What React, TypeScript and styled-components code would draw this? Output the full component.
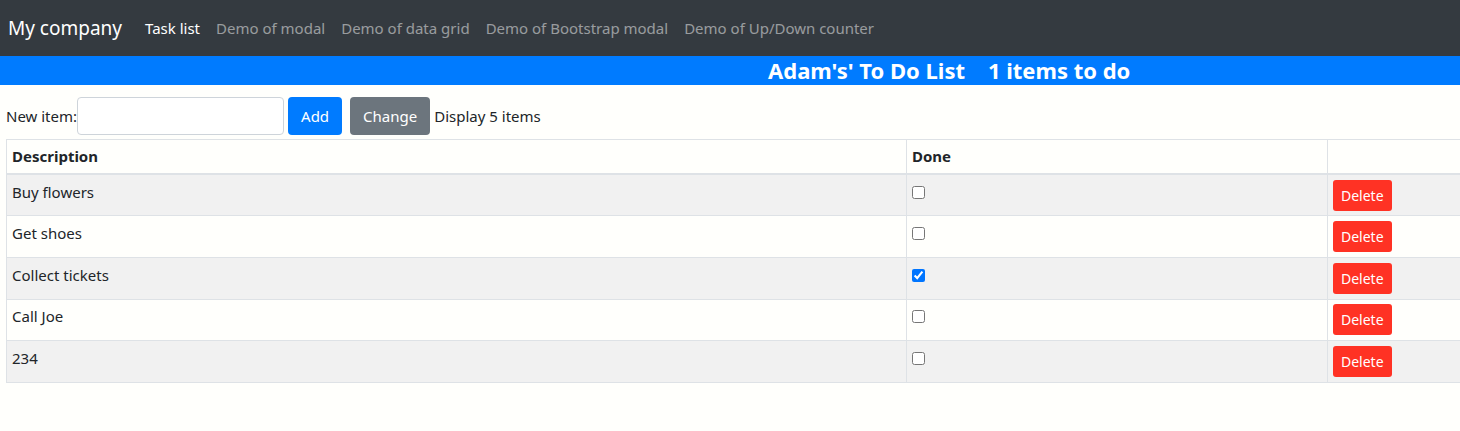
import React, { useState } from 'react';
import styled, { createGlobalStyle } from 'styled-components';

const GlobalStyle = createGlobalStyle`
  html, body {
    margin: 0;
    padding: 0;
    overflow-x: hidden;
    background-color: #fffffc;
    font-family: 'Noto Sans', 'Open Sans', sans-serif;
    font-size: 15px;
    color: #212529;
  }
`;

const Navbar = styled.nav`
  display: flex;
  align-items: center;
  height: 56px;
  padding: 0 8px;
  background-color: #343a40;
`;

const Brand = styled.span`
  color: #fff;
  font-size: 19px;
  margin-right: 15px;
`;

const NavLink = styled.a<{ $active?: boolean }>`
  color: ${p => (p.$active ? '#fff' : 'rgba(255, 255, 255, 0.5)')};
  font-size: 15px;
  text-decoration: none;
  padding: 0 8px;
`;

const Banner = styled.h4`
  margin: 0;
  height: 29px;
  line-height: 29px;
  background-color: #007bff;
  color: #fff;
  font-size: 22px;
  font-weight: 700;
  padding-left: 768px;
  white-space: pre;
`;

const Toolbar = styled.div`
  display: flex;
  align-items: center;
  padding: 12px 0 4px 6px;
  gap: 4px;
`;

const Label = styled.label`
  font-size: 15px;
`;

const TextInput = styled.input`
  box-sizing: border-box;
  width: 207px;
  height: 38px;
  border: 1px solid #ced4da;
  border-radius: 4px;
  background: #fff;
  margin-left: -4px;
`;

const Button = styled.button<{
  $variant: 'primary' | 'secondary' | 'danger';
  $small?: boolean;
  $spaced?: boolean;
}>`
  border: none;
  border-radius: ${p => (p.$small ? '3px' : '4px')};
  color: #fff;
  font-family: inherit;
  font-size: ${p => (p.$small ? '14px' : '15px')};
  height: ${p => (p.$small ? '31px' : '38px')};
  padding: ${p => (p.$small ? '0 8px' : '0 13px')};
  margin-left: ${p => (p.$spaced ? '4px' : '0')};
  background-color: ${p =>
    p.$variant === 'primary' ? '#007bff' : p.$variant === 'secondary' ? '#6c757d' : '#ff3224'};
`;

const Table = styled.table`
  margin-left: 6px;
  width: 1560px;
  table-layout: fixed;
  border-collapse: collapse;
  border: 1px solid #dee2e6;

  col.desc { width: 900px; }
  col.done { width: 421px; }

  th, td {
    border: 1px solid #dee2e6;
    padding: 4.8px 5px;
    text-align: left;
    vertical-align: top;
    font-size: 15px;
    line-height: 24px;
  }

  th {
    font-weight: 700;
    border-bottom-width: 2px;
    padding-top: 4px;
  }

  tbody tr:nth-child(odd) {
    background-color: #f1f1f1;
  }
`;

const Check = styled.input`
  margin: 6px 0 0 0;
  width: 13px;
  height: 13px;
`;

interface Item {
  action: string;
  done: boolean;
}

const App: React.FC = () => {
  const [items, setItems] = useState<Item[]>([
    { action: 'Buy flowers', done: false },
    { action: 'Get shoes', done: false },
    { action: 'Collect tickets', done: true },
    { action: 'Call Joe', done: false },
    { action: '234', done: false },
  ]);

  const toggle = (index: number) =>
    setItems(items.map((it, i) => (i === index ? { ...it, done: !it.done } : it)));

  // the original counts the ticked rows
  const count = items.filter(it => it.done).length;

  return (
    <>
      <GlobalStyle />
      <Navbar>
        <Brand>My company</Brand>
        <NavLink $active>Task list</NavLink>
        <NavLink>Demo of modal</NavLink>
        <NavLink>Demo of data grid</NavLink>
        <NavLink>Demo of Bootstrap modal</NavLink>
        <NavLink>Demo of Up/Down counter</NavLink>
      </Navbar>
      <Banner>{`Adam's' To Do List    ${count} items to do`}</Banner>
      <Toolbar>
        <Label>New item:</Label>
        <TextInput />
        <Button $variant="primary">Add</Button>
        <Button $variant="secondary" $spaced>
          Change
        </Button>
        <Label>Display 5 items</Label>
      </Toolbar>
      <Table>
        <colgroup>
          <col className="desc" />
          <col className="done" />
          <col />
        </colgroup>
        <thead>
          <tr>
            <th>Description</th>
            <th>Done</th>
            <th></th>
          </tr>
        </thead>
        <tbody>
          {items.map((item, i) => (
            <tr key={i}>
              <td>{item.action}</td>
              <td>
                <Check type="checkbox" checked={item.done} onChange={() => toggle(i)} />
              </td>
              <td>
                <Button $variant="danger" $small>
                  Delete
                </Button>
              </td>
            </tr>
          ))}
        </tbody>
      </Table>
    </>
  );
};

export default App;
